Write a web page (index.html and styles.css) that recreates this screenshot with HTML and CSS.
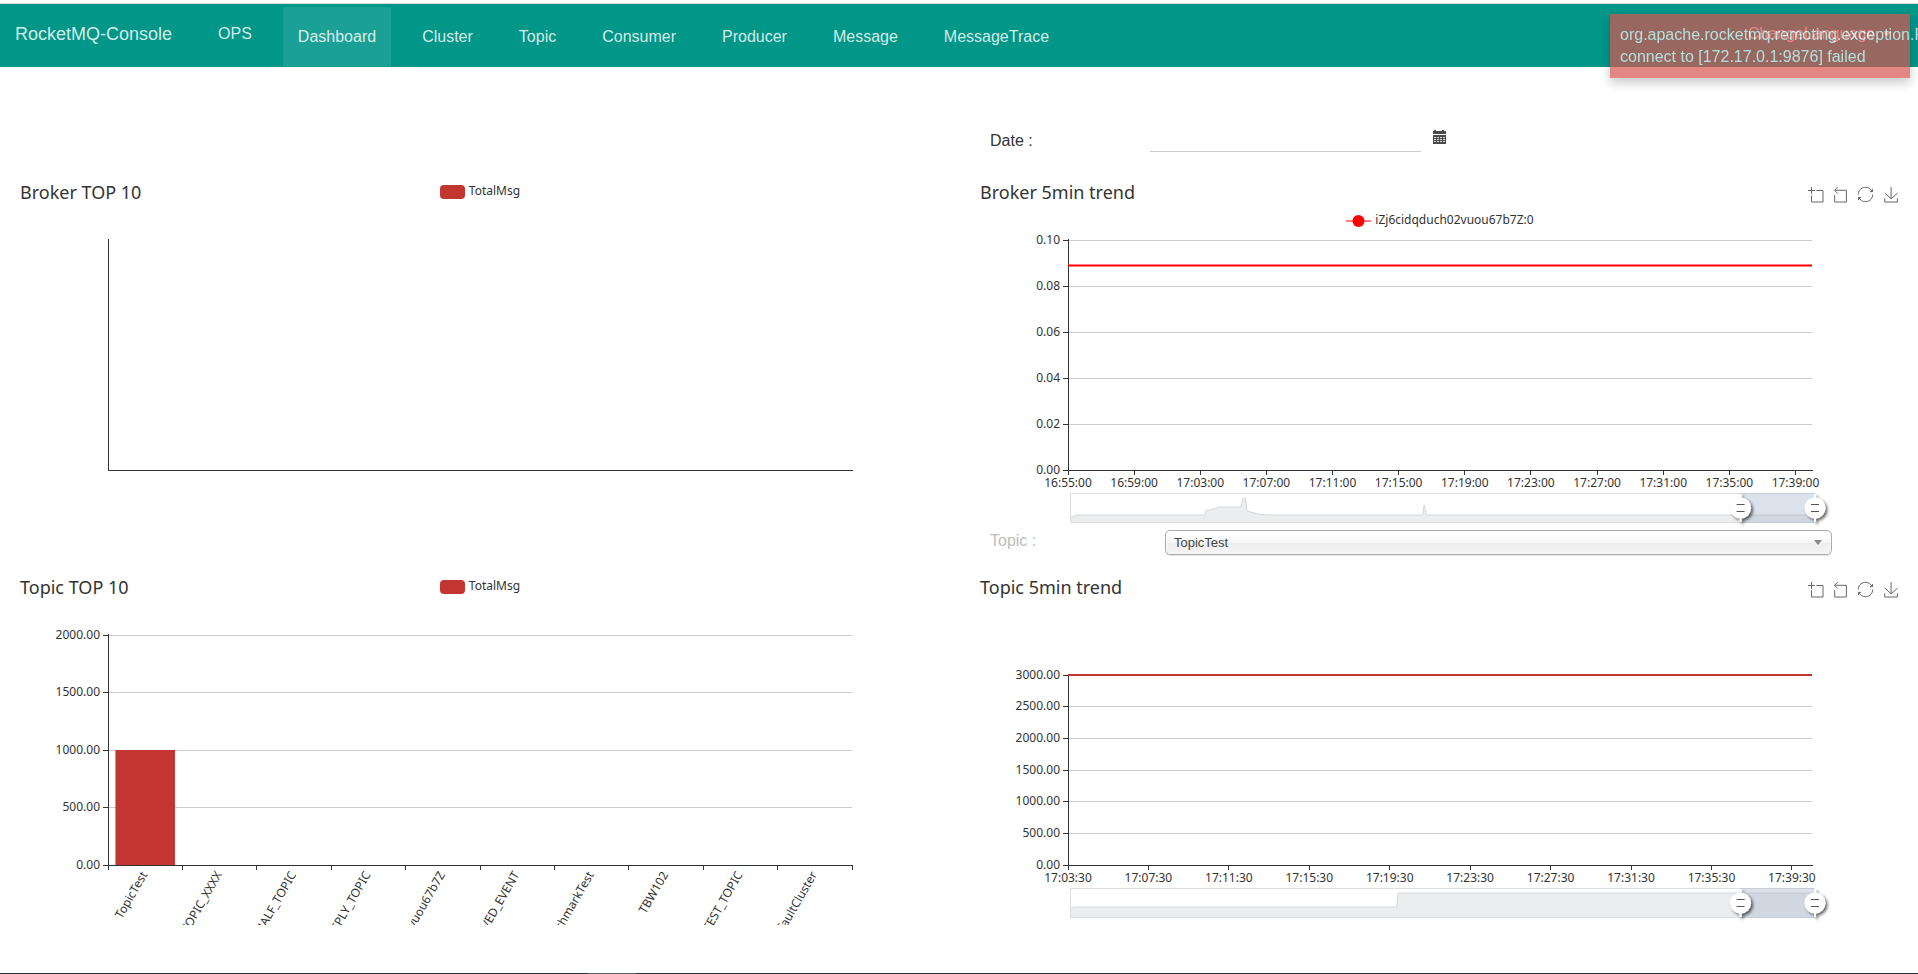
FILE: index.html
```html
<!DOCTYPE html>
<html lang="en">

<head>
  <meta charset="UTF-8">
  <meta name="viewport" content="width=device-width, initial-scale=1.0">
  <title>RocketMQ-Console</title>
  <link rel="stylesheet" href="styles.css">
</head>

<body>
  <header class="navbar">
    <a class="brand" href="#">RocketMQ-Console</a>
    <nav class="nav">
      <a class="ops" href="#">OPS</a>
      <a class="active" href="#">Dashboard</a>
      <a href="#">Cluster</a>
      <a href="#">Topic</a>
      <a href="#">Consumer</a>
      <a href="#">Producer</a>
      <a href="#">Message</a>
      <a href="#">MessageTrace</a>
    </nav>
    <button class="language" type="button">ChangeLanguage<span class="caret"></span></button>
  </header>

  <div class="toast" role="alert">org.apache.rocketmq.remoting.exception.RemotingConnectException: connect to [172.17.0.1:9876] failed</div>

  <main class="dashboard">
    <form class="filter date-filter">
      <label for="date">Date :</label>
      <input id="date" type="text">
      <button type="button" aria-label="Pick date">
        <svg width="13" height="14" viewBox="0 0 13 14">
          <path fill="#4a4a4a" d="M0 1h1V0h2v1h6V0h2v1h2v3H0zM0 5h13v9H0z" />
          <path stroke="#fff" stroke-dasharray="2 1" stroke-opacity=".8" d="M1 7.500h11M1 9.500h11M1 11.500h11" />
        </svg>
      </button>
    </form>

    <section class="chart">
      <div class="chart-head">
        <h2>Broker TOP 10</h2>
        <div class="legend"><i class="swatch"></i>TotalMsg</div>
      </div>
      <svg class="plot" id="brokerBar"></svg>
    </section>

    <section class="chart">
      <div class="chart-head trend">
        <h2>Broker 5min trend</h2>
        <div class="legend">
          <svg class="marker" width="25" height="14">
            <path stroke="#f00" stroke-width="2" stroke-opacity=".5" d="M0 7h25" />
            <circle cx="12.500" cy="7" r="6" fill="#f00" />
          </svg>iZj6cidqduch02vuou67b7Z:0
        </div>
        <div class="toolbox"></div>
      </div>
      <svg class="plot" id="brokerLine"></svg>
    </section>

    <form class="filter topic-filter">
      <label for="topic">Topic :</label>
      <div class="select">
        <select id="topic">
          <option>TopicTest</option>
        </select>
      </div>
    </form>

    <section class="chart">
      <div class="chart-head">
        <h2>Topic TOP 10</h2>
        <div class="legend"><i class="swatch"></i>TotalMsg</div>
      </div>
      <svg class="plot" id="topicBar"></svg>
    </section>

    <section class="chart">
      <div class="chart-head trend">
        <h2>Topic 5min trend</h2>
        <div class="toolbox"></div>
      </div>
      <svg class="plot" id="topicLine"></svg>
    </section>
  </main>

  <footer class="footer"><span></span></footer>

  <script src="charts.js"></script>
</body>

</html>
```
FILE: styles.css
```css
* {
  box-sizing: border-box;
}

body {
  margin: 0;
  min-height: 100vh;
  display: flex;
  flex-direction: column;
  overflow: hidden;
  font-family: "Liberation Sans", Arial, sans-serif;
  font-size: 16px;
  color: #333;
  background-color: #fff;
}

button {
  padding: 0;
  border: 0;
  background: none;
  font: inherit;
  cursor: pointer;
}

/* navbar */
.navbar {
  display: flex;
  align-items: flex-start;
  gap: 16px;
  margin-top: 3px;
  border-top: 1px solid #d5dcdb;
  height: 64px;
  padding-top: 3px;
  background-color: #009688;
  line-height: 20px;
}

.navbar a,
.language {
  padding: 17px 15px 20px;
  color: rgba(255, 255, 255, 0.84);
  text-decoration: none;
}

.navbar .brand {
  font-size: 18px;
}

.nav {
  display: flex;
  flex: 1;
  gap: 16px;
}

.navbar .nav a:not(.ops) {
  padding-top: 20px;
}

.navbar .active {
  background-color: rgba(255, 255, 255, 0.1);
}

.navbar .language {
  display: flex;
  align-items: center;
  gap: 8px;
  margin-right: 12px;
  color: #fff;
}

.caret {
  border: 4px solid transparent;
  border-top-color: currentColor;
  border-bottom: 0;
}

.toast {
  position: fixed;
  top: 14px;
  right: 8px;
  width: 300px;
  padding: 10px;
  line-height: 22px;
  color: #fff;
  background-color: #d9534f;
  box-shadow: 0 5px 10px rgba(0, 0, 0, 0.3);
  opacity: 0.7;
}

/* dashboard */
.dashboard {
  display: grid;
  grid-template-columns: 1fr 1fr;
  column-gap: 30px;
  padding: 0 13px 0 15px;
}

.filter {
  grid-column: 2;
  display: flex;
  padding-left: 15px;
}

.filter label {
  line-height: 22px;
}

.date-filter {
  align-items: flex-end;
  padding-top: 55px;
  padding-bottom: 28px;
}

.date-filter label {
  width: 160px;
}

.date-filter input {
  width: 271px;
  height: 30px;
  border: 0;
  border-bottom: 1px solid #ccc;
  background: none;
}

.date-filter button {
  height: 22px;
  margin-left: 12px;
}

.date-filter button svg {
  display: block;
  margin-bottom: 8px;
}

.topic-filter {
  align-items: flex-start;
  height: 45px;
}

.topic-filter label {
  width: 175px;
  color: #bdbdbd;
}

.select {
  position: relative;
  flex: 1;
  margin-right: 73px;
}

.select select {
  display: block;
  width: 100%;
  height: 25px;
  padding: 0 8px;
  appearance: none;
  border: 1px solid #aaa;
  border-radius: 5px;
  font-family: "Liberation Sans", Arial, sans-serif;
  font-size: 13px;
  color: #444;
  background: linear-gradient(#fff 20%, #f6f6f6 50%, #eee 52%, #f4f4f4 100%);
  box-shadow: 0 0 3px #fff inset, 0 1px 1px rgba(0, 0, 0, 0.1);
}

.select::after {
  content: "";
  position: absolute;
  top: 10px;
  right: 10px;
  border: 4px solid transparent;
  border-top: 5px solid #888;
  border-bottom: 0;
  pointer-events: none;
}

/* charts */
.chart {
  height: 350px;
  font-family: "Noto Sans", sans-serif;
  font-size: 12px;
}

.chart-head {
  display: grid;
  grid-template-columns: 1fr auto 1fr;
  grid-template-rows: 29px 21px;
}

.chart-head h2 {
  margin: 0;
  padding-left: 5px;
  font-size: 18px;
  font-weight: normal;
  line-height: 24px;
}

.legend {
  display: flex;
  gap: 4px;
  line-height: 21px;
}

.trend .legend {
  grid-column: 2;
  grid-row: 2;
}

.swatch {
  width: 25px;
  height: 14px;
  margin-top: 5px;
  border-radius: 4px;
  background-color: #c23531;
}

.marker {
  margin-top: 5px;
}

.toolbox {
  grid-column: 3;
  grid-row: 1;
  display: flex;
  justify-content: flex-end;
  gap: 10px;
  padding: 7px 7px 0 0;
}

.toolbox button,
.toolbox svg {
  display: block;
  width: 15px;
  height: 15px;
  overflow: visible;
}

.toolbox path {
  fill: none;
  stroke: #666;
  vector-effect: non-scaling-stroke;
}

.plot {
  display: block;
  width: 100%;
  height: 300px;
}

.plot text {
  fill: #333;
}

.footer {
  height: 1px;
  margin-top: auto;
  background-color: #262a35;
}

.footer span {
  display: block;
  width: 48px;
  height: 1px;
  margin-left: 588px;
  background-color: #5a5f66;
}
```
FILE: charts.js
```js
const icons = [
  ['Zoom', '0 0 58 58', 'M0,13.5h26.9 M13.5,26.9V0 M32.1,13.5H58V58H13.5 V32.1'],
  ['Zoom reset', '4 1 57 57', 'M22,1.4L9.9,13.5l12.3,12.3 M10.3,13.5H54.9v44.6 H10.3v-26'],
  ['Restore', '1 1 58 58', 'M47,18.9h9.8V8.7 M56.3,20.1 C52.1,9,40.5,0.6,26.8,2.1C12.6,3.7,1.6,16.2,2.1,30.6 M13,41.1H3.1v10.2 M3.7,39.9c4.2,11.1,15.8,19.5,29.5,18 c14.2-1.6,25.2-14.1,24.7-28.5'],
  ['Save as image', '-2 0 58 58', 'M4.7,22.9L29.3,45.5L54.7,23.4M4.6,43.6L4.6,58L53.8,58L53.8,43.6M29.2,45.1L29.2,0']
]

for (const box of document.querySelectorAll('.toolbox')) {
  box.innerHTML = icons.map(([name, viewBox, d]) =>
    `<button type="button" aria-label="${name}"><svg viewBox="${viewBox}"><path d="${d}"/></svg></button>`
  ).join('')
}

const bottom = 240

const times = (hour, minute, sec, count) => {
  const list = []
  for (let i = 0; i < count; i++) {
    const m = minute + i * 4
    list.push(`${hour + Math.floor(m / 60)}:${String(m % 60).padStart(2, '0')}:${sec}`)
  }
  return list
}

const charts = {
  brokerBar: { top: 10 },
  brokerLine: {
    top: 10, max: 0.1, steps: 5, points: 45, labels: times(16, 55, '00', 12),
    line: 0.0889, color: '#f00',
    // [share of the width, height in px]
    shadow: [[0, 5], [.004, 5], [.007, 7], [.181, 7], [.183, 12], [.188, 12], [.201, 15], [.23, 15], [.233, 24], [.236, 24], [.238, 11], [.253, 8], [.264, 7], [.474, 7], [.476, 17], [.479, 7], [1, 7]]
  },
  topicBar: {
    top: 10, max: 2000, steps: 4, bars: [1000],
    names: ['TopicTest', 'SCHEDULE_TOPIC_XXXX', 'RMQ_SYS_TRANS_HALF_TOPIC', 'DefaultCluster_REPLY_TOPIC', 'iZj6cidqduch02vuou67b7Z', 'OFFSET_MOVED_EVENT', 'BenchmarkTest', 'TBW102', 'SELF_TEST_TOPIC', 'DefaultCluster']
  },
  topicLine: {
    top: 50, max: 3000, steps: 6, points: 37, labels: times(17, 3, '30', 10),
    line: 3000, color: '#c23531',
    shadow: [[0, 7], [.002, 9], [.005, 10], [.439, 10], [.441, 24], [1, 24]]
  }
}

const path = (d, stroke, width = 1) => `<path d="${d}" fill="none" stroke="${stroke}" stroke-width="${width}"/>`

function handle(x) {
  return `<g transform="translate(${x} 278)">
    <g filter="url(#handleShadow)">
      <path d="M0 -14V14" stroke="#fff" stroke-width="2"/>
      <circle r="10.500" fill="#fff"/>
    </g>
    <path d="M-4 -3.500H4M-4 3.500H4" stroke="#555"/>
  </g>`
}

function slider(left, width, shadow) {
  const x = left + 2
  const pts = shadow.map(([px, h]) => `${x + px * width},${292 - h}`).join(' ')
  const from = x + width * 0.9
  return `<defs><filter id="handleShadow" x="-50%" y="-50%" width="200%" height="200%">
      <feDropShadow dx="2" dy="2" stdDeviation="1.500" flood-opacity=".6"/></filter></defs>
    <polygon points="${x},292 ${pts} ${x + width},292" fill="#ecedef"/>
    <polyline points="${pts}" fill="none" stroke="#d3d7db"/>
    <rect x="${x + .5}" y="263.500" width="${width}" height="29" fill="none" stroke="#ddd"/>
    <rect x="${from}" y="263" width="${width * 0.1}" height="30" fill="#a7b7cc" fill-opacity=".4"/>
    ${handle(from + 1)}${handle(x + width + 1)}`
}

function draw(id) {
  const { top, max, steps, points, labels, names, bars, line, color, shadow } = charts[id]
  const svg = document.getElementById(id)
  const w = svg.clientWidth
  const left = Math.round(w * 0.1)
  const width = w * 0.8
  const right = left + width
  const snap = v => Math.floor(v) + 0.5
  const y = v => bottom - (bottom - top) * v / max
  let out = ''

  if (steps) {
    for (let i = 0; i <= steps; i++) {
      const v = max * i / steps
      // the small term keeps 0.06 and the like from landing just under a pixel
      const gy = snap(y(v) + 0.01)
      out += path(`M${left} ${gy}H${right}`, '#ccc')
      out += path(`M${left - 5} ${gy}h5`, '#333')
      out += `<text x="${left - 8}" y="${gy + 3.5}" text-anchor="end">${v.toFixed(2)}</text>`
    }
  }

  for (const [i, v] of (bars || []).entries()) {
    const band = width / names.length
    out += `<rect x="${left + band * (i + .1)}" y="${y(v)}" width="${band * .8}" height="${bottom - y(v)}" fill="#c23531"/>`
  }

  out += path(`M${snap(left)} ${top - 1}V${bottom}M${left} ${bottom + .5}H${right + 1}`, '#333')

  if (labels) {
    labels.forEach((label, i) => {
      const x = left + width * i * 4 / points
      out += path(`M${snap(x)} ${bottom}v5`, '#333')
      out += `<text x="${x}" y="257" text-anchor="middle">${label}</text>`
    })
  }

  if (names) {
    const band = width / names.length
    for (let i = 0; i <= names.length; i++) {
      out += path(`M${snap(left + band * i)} ${bottom}v5`, '#333')
    }
    names.forEach((name, i) => {
      out += `<text transform="translate(${left + band * (i + .5)} 248) rotate(-60)" y="3" text-anchor="end">${name}</text>`
    })
  }

  if (line) {
    const ly = line === max ? y(line) : snap(y(line))
    out += path(`M${left} ${ly}H${right}`, color, 2)
  }
  if (shadow) out += slider(left, width, shadow)

  svg.innerHTML = out
}

const drawAll = () => Object.keys(charts).forEach(draw)
drawAll()
window.onresize = drawAll
```
